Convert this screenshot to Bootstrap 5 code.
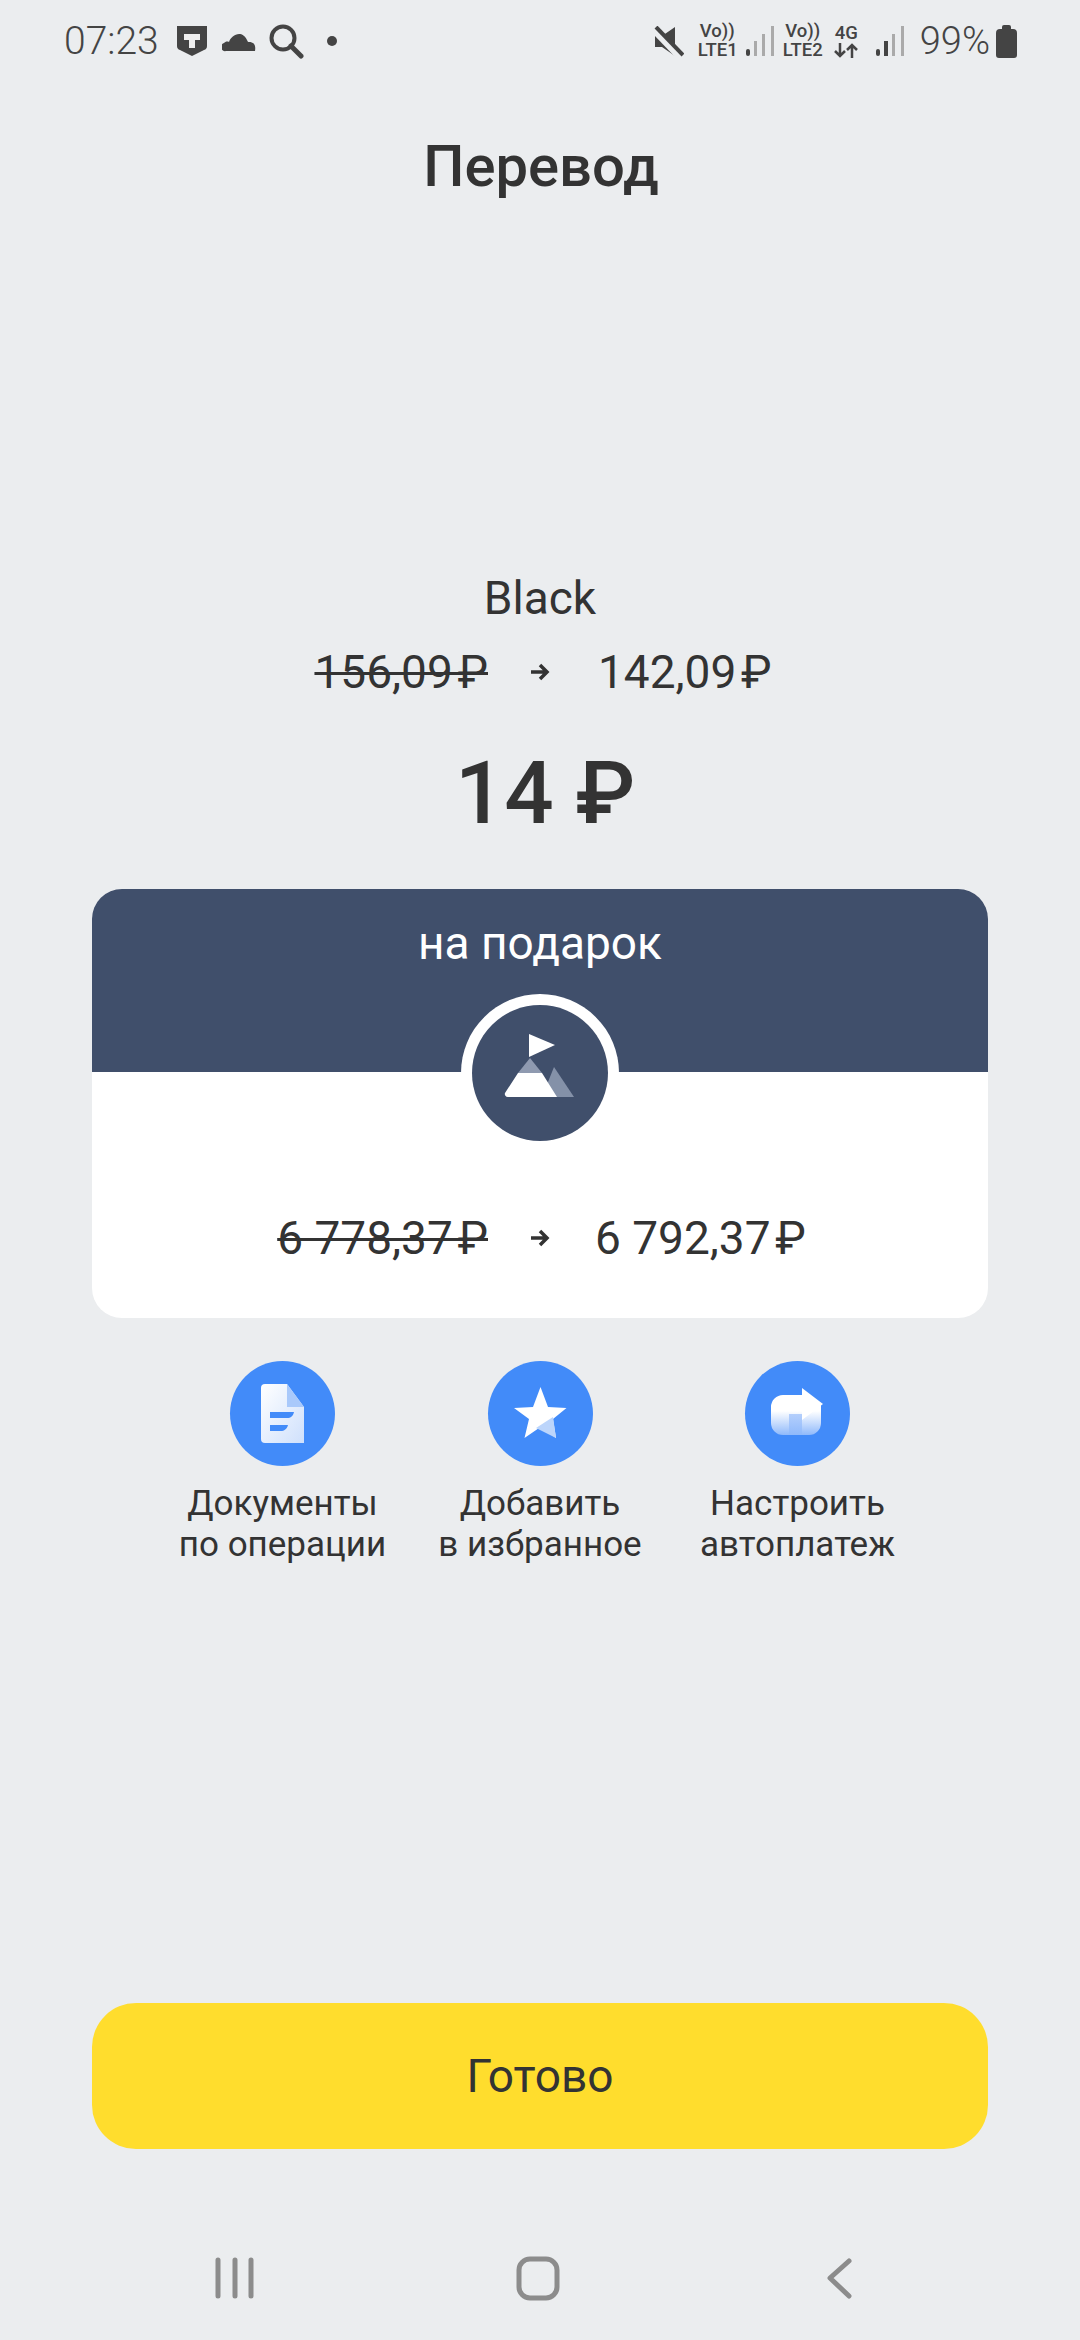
<!DOCTYPE html>
<html lang="ru">
<head>
  <meta charset="UTF-8">
  <title>Перевод</title>
  <link href="https://cdn.jsdelivr.net/npm/bootstrap@5.3.2/dist/css/bootstrap.min.css" rel="stylesheet">
  <style>
    body { background: #ebedef; color: #333; font-family: Roboto, "Liberation Sans", sans-serif; width: 1080px; height: 2340px; overflow: hidden; }
    .status-bar { height: 82px; padding: 0 63px 0 64px; color: #444; }
    .status-time { font-size: 39px; font-weight: 300; line-height: 1; }
    .status-pct { font-size: 38px; font-weight: 300; line-height: 1; margin-left: 16px; }
    .net { font-weight: 500; line-height: 19px; font-size: 18.5px; text-align: center; white-space: nowrap; }
    .net-1 { margin-left: 14px; width: 39px; }
    .net-2 { margin-left: 8px; width: 42px; }
    .net-3 { margin-left: 10px; width: 25px; }
    .st-shield { margin-left: 18px; }
    .st-cloud { margin-left: 15px; }
    .st-search { margin-left: 13px; }
    .st-dot { margin-left: 23px; }
    .st-bars-1 { margin-left: 9px; }
    .st-bars-2 { margin-left: 17px; }
    .st-batt { margin-left: 6px; }
    .page-title { font-size: 58px; font-weight: 500; line-height: 64px; margin: 52px 0 0; padding-left: 2px; }
    .acc-name { font-size: 46px; line-height: 52px; margin-top: 374px; font-weight: 400; }
    .amount-row { font-size: 46px; line-height: 52px; display: grid; grid-template-columns: 1fr 20px 1fr; align-items: center; }
    .amount-old, .amount-new { white-space: nowrap; }
    .amount-old { text-decoration: line-through; text-decoration-thickness: 3px; justify-self: end; margin-right: 42px; }
    .amount-new { margin-left: 48px; }
    .top-row { margin-top: 22px; }
    .big-sum { font-size: 87px; font-weight: 500; line-height: 104px; margin-top: 43px; padding-left: 10px; }
    .gift-card { margin: 44px 92px 0; height: 429px; border-radius: 30px; overflow: hidden; background: #fff; position: relative; }
    .gift-head { height: 183px; background: #404f6b; color: #fff; font-size: 46px; line-height: 48px; padding-top: 30px; }
    .gift-badge { position: absolute; left: 369px; top: 105px; width: 158px; height: 158px; background: #fff; border-radius: 50%; }
    .gift-disc { width: 136px; height: 136px; background: #404f6b; border-radius: 50%; }
    .gift-body { padding-top: 140px; }
    .gift-body .amount-new { margin-left: 45px; }
    .actions { margin-top: 43px; padding: 0 165px; }
    .action-item { width: 235px; font-size: 35px; line-height: 41px; }
    .action-disc { width: 105px; height: 105px; background: #428bf9; border-radius: 50%; margin-bottom: 17px; }
    .done-btn { margin: 0 92px; height: 146px; background: #ffdd2d; border-radius: 44px; font-size: 46px; color: #333; border: 0; width: 896px; }
    .done-btn:hover { background: #ffdd2d; color: #333; }
    .nav-bar { height: 191px; }
  </style>
</head>
<body class="m-0 d-flex flex-column">

  <!-- статус-бар -->
  <div class="status-bar d-flex align-items-center justify-content-between">
    <div class="d-flex align-items-center">
      <span class="status-time">07:23</span>
      <svg class="st-shield" width="30" height="31" viewBox="0 0 30 31"><path d="M0 0H30V20Q30 23 27 24L15 30 3 24Q0 23 0 20Z" fill="#444"/><path d="M7 8H23V14H18V22H12V14H7Z" fill="#eee"/></svg>
      <svg class="st-cloud" width="34" height="21" viewBox="0 0 34 21"><path d="M4 20a4 4 0 0 1-2-8c1-1 3-2 5-1 2-7 13-13 18-2 1 2 1 2 2 2 5 0 7 3 6 9z" fill="#444"/></svg>
      <svg class="st-search" width="35" height="35" viewBox="0 0 35 35"><circle cx="14" cy="14" r="11.500" fill="none" stroke="#444" stroke-width="4"/><path d="M22 22L32 32" stroke="#444" stroke-width="5" stroke-linecap="round"/></svg>
      <svg class="st-dot" width="10" height="10" viewBox="0 0 10 10"><circle cx="5" cy="5" r="5" fill="#444"/></svg>
    </div>
    <div class="d-flex align-items-center">
      <svg width="30" height="31" viewBox="0 0 30 31"><path d="M1 10H8L21 1V30L8 21H1Z" fill="#444"/><path d="M-1 3L26 31" stroke="#ebedef" stroke-width="7"/><path d="M2 1L29 29" stroke="#444" stroke-width="4"/></svg>
      <div class="net net-1">Vo))<br>LTE1</div>
      <svg class="st-bars-1" width="28" height="30" viewBox="0 0 28 30"><rect x="0" y="23" width="4" height="7" rx="2" fill="#444"/><rect x="8" y="15" width="3" height="15" fill="#aaa"/><rect x="16" y="8" width="3" height="22" fill="#aaa"/><rect x="25" y="0" width="3" height="30" fill="#aaa"/></svg>
      <div class="net net-2">Vo))<br>LTE2</div>
      <div class="net net-3">4G<br><svg class="d-block mx-auto" width="24" height="15" viewBox="0 0 24 15"><path d="M6 0V13M1 8L6 13 11 8M18 15V2M13 7L18 2 23 7" fill="none" stroke="#444" stroke-width="2.500"/></svg></div>
      <svg class="st-bars-2" width="28" height="30" viewBox="0 0 28 30"><rect x="0" y="23" width="4" height="7" rx="2" fill="#444"/><rect x="8" y="15" width="4" height="15" fill="#444"/><rect x="16" y="8" width="3" height="22" fill="#aaa"/><rect x="25" y="0" width="3" height="30" fill="#aaa"/></svg>
      <span class="status-pct">99%</span>
      <svg class="st-batt" width="21" height="33" viewBox="0 0 21 33"><path d="M6 4V2a2 2 0 0 1 2-2h5a2 2 0 0 1 2 2v2h2a4 4 0 0 1 4 4v22a3 3 0 0 1-3 3H3a3 3 0 0 1-3-3V8a4 4 0 0 1 4-4z" fill="#444"/></svg>
    </div>
  </div>

  <h1 class="page-title text-center">Перевод</h1>

  <div class="acc-name text-center">Black</div>
  <div class="amount-row top-row">
    <span class="amount-old">156,09&#8202;₽</span>
    <svg width="20" height="18" viewBox="0 0 20 18"><path d="M1 9H17M10 2L17 9 10 16" fill="none" stroke="#333" stroke-width="3.500"/></svg>
    <span class="amount-new">142,09&#8202;₽</span>
  </div>
  <div class="big-sum text-center">14 ₽</div>

  <div class="gift-card">
    <div class="gift-head text-center">на подарок</div>
    <div class="gift-badge d-flex align-items-center justify-content-center">
      <div class="gift-disc">
        <svg width="136" height="136" viewBox="0 0 136 136">
          <path d="M57 29L83 40 57 52Z" fill="#fff"/>
          <path d="M82 62L102 92H70Z" fill="#8491a8"/>
          <path d="M58 53L70 68H46Z" fill="#8f9ab0"/>
          <path d="M46 68H70L85 92H36a3 3 0 0 1-3-4Z" fill="#fff"/>
        </svg>
      </div>
    </div>
    <div class="gift-body amount-row">
      <span class="amount-old">6 778,37&#8202;₽</span>
      <svg width="20" height="18" viewBox="0 0 20 18"><path d="M1 9H17M10 2L17 9 10 16" fill="none" stroke="#333" stroke-width="3.500"/></svg>
      <span class="amount-new">6 792,37&#8202;₽</span>
    </div>
  </div>

  <div class="actions d-flex justify-content-between">
    <div class="action-item d-flex flex-column align-items-center text-center">
      <div class="action-disc">
        <svg width="105" height="105" viewBox="0 0 105 105">
          <defs><linearGradient id="docFill" x1="0" y1="0" x2="1" y2="1"><stop offset="0" stop-color="#fff"/><stop offset="1" stop-color="#cfe0fc"/></linearGradient></defs>
          <path d="M35 23H57L74 46V82H35a4 4 0 0 1-4-4V27a4 4 0 0 1 4-4Z" fill="url(#docFill)"/>
          <path d="M57 23L74 46H57Z" fill="#a9c9fb"/>
          <path d="M40 51H64C63 55 61 57 57 57H40Z M40 64H58C57 68 54 70 51 70H40Z" fill="#428bf9"/>
        </svg>
      </div>
      <div>Документы<br>по операции</div>
    </div>
    <div class="action-item d-flex flex-column align-items-center text-center">
      <div class="action-disc">
        <svg width="105" height="105" viewBox="0 0 105 105">
          <path d="M52.500 26L60 46 78.500 47 65 58 68 77 52.500 66 36.500 77 41 58 26 47 45 46Z" fill="#fff"/>
          <path d="M65 56L68 77 48 67Z" fill="#bcd5fb"/>
        </svg>
      </div>
      <div>Добавить<br>в избранное</div>
    </div>
    <div class="action-item d-flex flex-column align-items-center text-center">
      <div class="action-disc">
        <svg width="105" height="105" viewBox="0 0 105 105">
          <defs><linearGradient id="shareFill" x1="0" y1="0" x2="0" y2="1"><stop offset="0.4" stop-color="#fff"/><stop offset="1" stop-color="#8fb9fb"/></linearGradient>
          <linearGradient id="shareNotch" x1="0" y1="0" x2="0" y2="1"><stop offset="0" stop-color="#b4cffc"/><stop offset="1" stop-color="#8fb9fb"/></linearGradient></defs>
          <path d="M57 34H38A12 12 0 0 0 26 46V62A12 12 0 0 0 38 74H64A12 12 0 0 0 76 62V44H57Z" fill="url(#shareFill)"/>
          <path d="M44 53H57V74H44Z" fill="url(#shareNotch)"/>
          <path d="M57 27L78 43 57 59Z" fill="#fff"/>
        </svg>
      </div>
      <div>Настроить<br>автоплатеж</div>
    </div>
  </div>

  <div class="mt-auto">
    <button type="button" class="btn done-btn d-block">Готово</button>
  </div>

  <!-- системная навигация -->
  <div class="nav-bar position-relative">
    <svg class="d-block" width="1080" height="191" viewBox="0 2149 1080 191">
      <path d="M218 2260V2296M235 2260V2296M251 2260V2296" stroke="#8c8c8c" stroke-width="5" stroke-linecap="round"/>
      <rect x="519" y="2259" width="38" height="39" rx="11" fill="none" stroke="#8c8c8c" stroke-width="5"/>
      <path d="M849 2261L830 2278 849 2296" fill="none" stroke="#8c8c8c" stroke-width="5" stroke-linecap="round" stroke-linejoin="round"/>
    </svg>
  </div>

</body>
</html>
